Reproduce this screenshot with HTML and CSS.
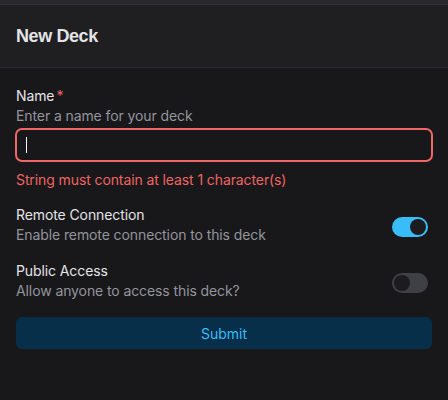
FILE: index.html
```html
<!DOCTYPE html>
<html>
<head>
<meta charset="utf-8">
<link rel="stylesheet" href="styles.css">
</head>
<body>
<div class="topbar"></div>
<header class="header"><h1 class="title">New Deck</h1></header>
<form class="form">
  <div class="field">
    <label class="label">Name<span class="req">*</span></label>
    <div class="desc">Enter a name for your deck</div>
    <div class="input"><span class="caret"></span></div>
    <div class="error">String must contain at least 1 character(s)</div>
  </div>
  <div class="row">
    <div class="row-text">
      <div class="label">Remote Connection</div>
      <div class="desc">Enable remote connection to this deck</div>
    </div>
    <span class="toggle on"><span class="knob"></span></span>
  </div>
  <div class="row">
    <div class="row-text">
      <div class="label">Public Access</div>
      <div class="desc">Allow anyone to access this deck?</div>
    </div>
    <span class="toggle"><span class="knob"></span></span>
  </div>
  <button type="button" class="submit">Submit</button>
</form>
</body>
</html>
```
FILE: styles.css
```css
html, body {
  margin: 0;
  padding: 0;
  background: #18181b;
  font-family: "Inter", "Liberation Sans", sans-serif;
  color: #e4e4e7;
}
.topbar {
  height: 4px;
  background: #28282d;
  border-bottom: 1px solid #323238;
}
.header {
  height: 63px;
  background: #1f1f22;
  border-bottom: 1px solid #2c2c31;
  display: flex;
  align-items: center;
  padding: 0 16px;
  box-sizing: border-box;
}
.title {
  margin: 0;
  font-family: "Liberation Sans", Arial, sans-serif;
  font-size: 18px;
  font-weight: 700;
  color: #e4e4e7;
  letter-spacing: -0.4px;
}
.form {
  padding: 18px 16px 0;
  display: flex;
  flex-direction: column;
  font-size: 14px;
  letter-spacing: -0.1px;
}
.label {
  display: block;
  font-size: 14px;
  line-height: 20px;
  color: #e4e4e7;
}
.req {
  color: #ef6461;
  margin-left: 2px;
}
.desc {
  font-size: 14px;
  line-height: 20px;
  color: #94949c;
}
.input {
  margin-top: 2px;
  height: 34px;
  box-sizing: border-box;
  border: 2px solid #ef6767;
  border-radius: 7px;
  margin-left: -1px;
  margin-right: -1px;
  display: flex;
  align-items: center;
  padding-left: 9px;
}
.caret {
  width: 1px;
  height: 16px;
  background: #f4f4f5;
}
.error {
  margin-top: 8px;
  font-size: 14px;
  line-height: 20px;
  color: #ef6461;
}
.row {
  display: flex;
  align-items: center;
  justify-content: space-between;
  margin-top: 15px;
  padding-right: 4px;
}
.row + .row {
  margin-top: 16px;
}
.toggle {
  width: 36px;
  height: 20px;
  border-radius: 10px;
  background: #3f3f46;
  display: flex;
  align-items: center;
  padding: 2px;
  box-sizing: border-box;
  margin-top: 3px;
}
.toggle .knob {
  width: 16px;
  height: 16px;
  border-radius: 50%;
  background: #1c1c1f;
}
.toggle.on {
  background: #38bdf8;
  justify-content: flex-end;
}
.submit {
  margin-top: 16px;
  height: 32px;
  border: none;
  border-radius: 6px;
  background: #082f49;
  color: #38bdf8;
  font-family: inherit;
  font-size: 14px;
}
```
